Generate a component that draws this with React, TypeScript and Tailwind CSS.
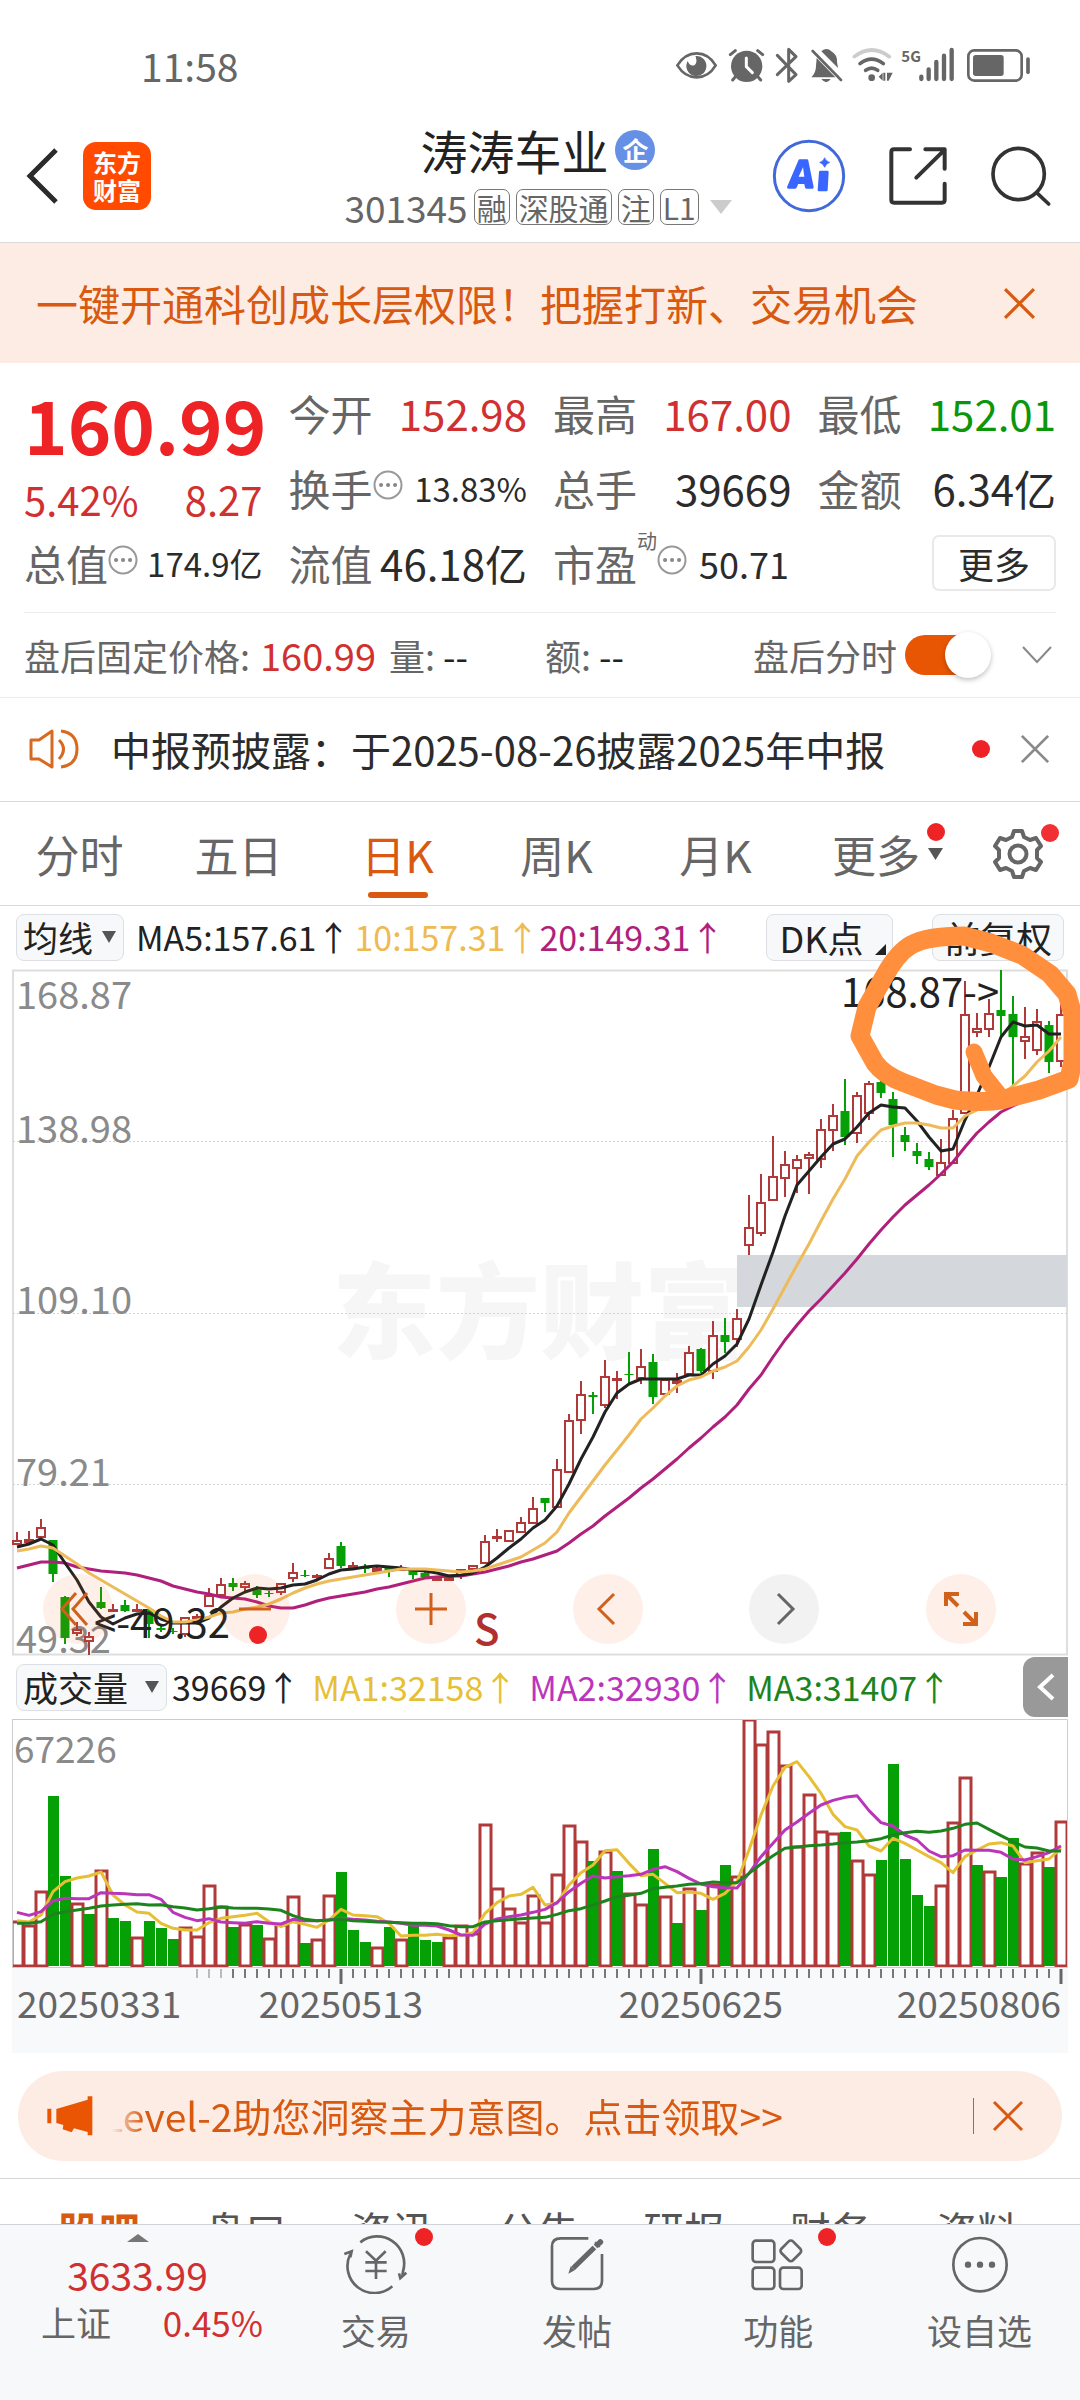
import type { ReactNode } from "react";

const RED = "#b03a3a";
const GREEN = "#05a005";

// direction, open/close top, open/close bottom, high, low
type Candle = ["r" | "g", number, number, number, number];

const candles: Candle[] = [
  ["r", 1540, 1544, 1532, 1544], ["r", 1539, 1542, 1531, 1543], ["r", 1527, 1537, 1519, 1538], ["g", 1540, 1574, 1540, 1582],
  ["g", 1597, 1638, 1596, 1644], ["r", 1629, 1633, 1622, 1636], ["r", 1636, 1641, 1632, 1655], ["g", 1602, 1608, 1587, 1609],
  ["r", 1609, 1610, 1604, 1612], ["g", 1605, 1611, 1600, 1612], ["r", 1609, 1610, 1604, 1612], ["g", 1609, 1624, 1609, 1638],
  ["g", 1628, 1630, 1626, 1632], ["g", 1631, 1632, 1628, 1634], ["r", 1617, 1634, 1617, 1637], ["r", 1616, 1618, 1614, 1619],
  ["r", 1595, 1606, 1588, 1606], ["r", 1584, 1595, 1578, 1595], ["g", 1583, 1587, 1578, 1591], ["r", 1583, 1587, 1581, 1591],
  ["g", 1590, 1595, 1586, 1598], ["g", 1593, 1594, 1591, 1597], ["r", 1583, 1592, 1583, 1595], ["r", 1572, 1578, 1563, 1582],
  ["g", 1575, 1576, 1570, 1577], ["r", 1575, 1577, 1574, 1579], ["r", 1558, 1568, 1553, 1568], ["g", 1546, 1566, 1542, 1568],
  ["r", 1565, 1567, 1562, 1568], ["g", 1567, 1569, 1564, 1573], ["r", 1568, 1571, 1567, 1571], ["g", 1568, 1572, 1567, 1577],
  ["r", 1567, 1570, 1565, 1570], ["g", 1569, 1575, 1568, 1579], ["g", 1573, 1577, 1572, 1577], ["r", 1578, 1580, 1578, 1581],
  ["r", 1577, 1580, 1576, 1581], ["r", 1569, 1575, 1569, 1579], ["r", 1565, 1569, 1565, 1570], ["r", 1541, 1563, 1535, 1563],
  ["r", 1536, 1538, 1529, 1542], ["r", 1530, 1541, 1530, 1541], ["r", 1522, 1532, 1517, 1532], ["r", 1508, 1523, 1497, 1523],
  ["g", 1498, 1503, 1498, 1512], ["r", 1469, 1507, 1459, 1507], ["r", 1420, 1472, 1414, 1472], ["r", 1394, 1420, 1381, 1434],
  ["g", 1395, 1397, 1392, 1414], ["r", 1376, 1405, 1360, 1408], ["r", 1378, 1379, 1371, 1399], ["g", 1374, 1375, 1352, 1383],
  ["r", 1366, 1378, 1349, 1384], ["g", 1362, 1397, 1354, 1404], ["r", 1379, 1394, 1379, 1394], ["r", 1380, 1383, 1373, 1393],
  ["r", 1352, 1374, 1346, 1374], ["g", 1349, 1371, 1348, 1373], ["r", 1335, 1371, 1321, 1379], ["g", 1335, 1342, 1318, 1353],
  ["r", 1318, 1339, 1309, 1347], ["r", 1227, 1245, 1195, 1255], ["r", 1202, 1233, 1174, 1236], ["r", 1176, 1200, 1136, 1200],
  ["r", 1164, 1178, 1151, 1197], ["r", 1159, 1168, 1155, 1193], ["r", 1154, 1158, 1152, 1194], ["r", 1129, 1159, 1119, 1168],
  ["r", 1115, 1130, 1104, 1151], ["g", 1111, 1137, 1079, 1145], ["r", 1095, 1133, 1092, 1143], ["r", 1083, 1113, 1081, 1120],
  ["g", 1082, 1093, 1057, 1098], ["g", 1099, 1125, 1092, 1157], ["g", 1135, 1142, 1127, 1151], ["g", 1151, 1156, 1143, 1164],
  ["g", 1159, 1167, 1152, 1170], ["r", 1162, 1175, 1139, 1175], ["r", 1118, 1163, 1110, 1163], ["r", 1014, 1113, 981, 1113],
  ["r", 1028, 1032, 1013, 1037], ["r", 1013, 1029, 999, 1037], ["g", 1010, 1016, 970, 1037], ["g", 1014, 1037, 996, 1086],
  ["r", 1036, 1041, 1007, 1059], ["r", 1021, 1050, 1009, 1055], ["g", 1025, 1062, 1021, 1073], ["r", 1014, 1061, 999, 1067],
];

const ma5 = [
  1547, 1544, 1539, 1545, 1563, 1580, 1602, 1617, 1624, 1618, 1614, 1613, 1619, 1623, 1623, 1623, 1618, 1607, 1598, 1592, 1588, 1589,
  1588, 1585, 1584, 1580, 1574, 1570, 1569, 1567, 1566, 1567, 1568, 1570, 1571, 1573, 1576, 1575, 1573, 1567, 1558, 1548, 1539, 1528,
  1520, 1506, 1484, 1459, 1437, 1412, 1393, 1384, 1379, 1379, 1379, 1379, 1375, 1375, 1364, 1356, 1344, 1319, 1285, 1252, 1216, 1185,
  1171, 1157, 1144, 1139, 1127, 1113, 1105, 1107, 1108, 1121, 1137, 1151, 1149, 1120, 1095, 1067, 1037, 1022, 1026, 1025, 1034, 1034,
];

const ma10 = [
  1551, 1549, 1546, 1548, 1556, 1564, 1573, 1580, 1587, 1594, 1601, 1608, 1616, 1622, 1622, 1620, 1617, 1613, 1612, 1609, 1607, 1604,
  1599, 1593, 1588, 1584, 1581, 1579, 1577, 1575, 1573, 1571, 1569, 1569, 1569, 1570, 1571, 1572, 1571, 1569, 1565, 1561, 1557, 1550,
  1543, 1532, 1513, 1497, 1481, 1465, 1450, 1435, 1419, 1408, 1396, 1386, 1380, 1377, 1371, 1367, 1361, 1347, 1330, 1309, 1287, 1265,
  1244, 1221, 1199, 1179, 1156, 1142, 1130, 1126, 1123, 1123, 1125, 1128, 1128, 1116, 1110, 1104, 1095, 1086, 1076, 1062, 1051, 1037,
];

const ma20 = [
  1568, 1565, 1562, 1562, 1563, 1567, 1569, 1571, 1572, 1573, 1575, 1578, 1581, 1586, 1589, 1592, 1594, 1597, 1598, 1599, 1602, 1606,
  1608, 1608, 1605, 1601, 1598, 1596, 1594, 1592, 1589, 1587, 1584, 1581, 1578, 1577, 1576, 1576, 1574, 1572, 1569, 1566, 1562, 1559,
  1555, 1551, 1543, 1534, 1526, 1516, 1507, 1498, 1488, 1479, 1469, 1459, 1448, 1438, 1427, 1417, 1405, 1389, 1375, 1357, 1340, 1325,
  1311, 1299, 1286, 1273, 1259, 1244, 1230, 1217, 1205, 1195, 1185, 1174, 1162, 1147, 1133, 1122, 1112, 1106, 1100, 1094, 1088, 1082,
];

const volumeColors = "rrrggrgrggrgggrrrrgrgrrrgrrgggrgrgggrrrrrrrrrrrrgrgrrgrgrgrgrrrrrrrrrgrrgggggrrrgrggrrgr";

const volumes = [
  1921, 1925, 1891, 1796, 1876, 1903, 1914, 1870, 1918, 1921, 1937, 1921, 1928, 1939, 1927, 1936, 1885, 1906, 1927, 1924, 1925, 1938,
  1924, 1896, 1943, 1939, 1895, 1872, 1930, 1942, 1947, 1927, 1939, 1926, 1940, 1942, 1937, 1925, 1933, 1824, 1888, 1908, 1922, 1895,
  1922, 1874, 1825, 1841, 1861, 1851, 1871, 1893, 1904, 1849, 1896, 1923, 1888, 1910, 1884, 1865, 1876, 1719, 1744, 1731, 1765, 1846,
  1794, 1831, 1833, 1832, 1860, 1874, 1860, 1764, 1859, 1895, 1906, 1885, 1822, 1777, 1865, 1871, 1877, 1838, 1863, 1852, 1867, 1821,
];

// volume averages, in thirds of a unit
const volMa1 = [
  1322, 1326, 1305, 1235, 1205, 1194, 1188, 1176, 1245, 1275, 1296, 1300, 1330, 1345, 1350, 1350, 1328, 1315, 1310, 1306, 1300, 1325,
  1340, 1325, 1333, 1342, 1320, 1288, 1305, 1307, 1310, 1330, 1368, 1366, 1366, 1363, 1367, 1366, 1358, 1300, 1268, 1248, 1243, 1222,
  1275, 1270, 1215, 1178, 1155, 1112, 1109, 1150, 1187, 1183, 1210, 1238, 1236, 1240, 1258, 1240, 1205, 1110, 1005, 918, 862, 845,
  890, 940, 1003, 1040, 1050, 1098, 1113, 1075, 1090, 1110, 1130, 1148, 1178, 1130, 1110, 1092, 1088, 1098, 1148, 1142, 1137, 1105,
];

const volMa2 = [
  1297, 1306, 1295, 1262, 1255, 1256, 1256, 1238, 1240, 1241, 1244, 1244, 1258, 1297, 1312, 1322, 1316, 1326, 1328, 1330, 1325, 1330,
  1332, 1318, 1322, 1322, 1320, 1315, 1318, 1320, 1324, 1326, 1330, 1336, 1336, 1338, 1350, 1365, 1366, 1332, 1317, 1310, 1305, 1297,
  1288, 1268, 1235, 1210, 1188, 1194, 1190, 1187, 1183, 1168, 1160, 1175, 1195, 1212, 1220, 1223, 1224, 1180, 1130, 1090, 1050, 1026,
  1000, 975, 961, 952, 947, 992, 1028, 1038, 1065, 1080, 1113, 1130, 1127, 1110, 1111, 1111, 1117, 1137, 1140, 1130, 1118, 1098,
];

const volMa3 = [
  1330, 1330, 1325, 1303, 1295, 1290, 1285, 1278, 1275, 1273, 1271, 1275, 1274, 1280, 1284, 1290, 1286, 1281, 1284, 1285, 1285, 1287,
  1291, 1307, 1318, 1322, 1320, 1318, 1322, 1324, 1326, 1327, 1328, 1330, 1330, 1331, 1337, 1340, 1340, 1326, 1322, 1319, 1316, 1314,
  1312, 1303, 1292, 1286, 1275, 1263, 1250, 1246, 1240, 1226, 1222, 1218, 1213, 1211, 1206, 1208, 1208, 1180, 1152, 1127, 1105, 1101,
  1097, 1095, 1092, 1088, 1086, 1082, 1076, 1065, 1058, 1054, 1057, 1053, 1045, 1033, 1029, 1048, 1067, 1085, 1101, 1104, 1113, 1113,
];

const xOf = (i: number) => 17 + i * 12;
const toPoints = (ys: number[]) => ys.map((y, i) => `${xOf(i)},${y}`).join(" ");
const volY = (v: number) => 1480 + v / 3;

function StatusBar() {
  return (
    <div className="flex h-[126px] items-center justify-between pt-[4px] pr-[47px] pl-[141px] text-[#666]">
      <span className="text-[39px] leading-[40px]">11:58</span>
      <svg width="357" height="40" viewBox="228 45 1071 120" fill="none" stroke="#666">
        {/* eye comfort */}
        <path d="M232 106 C262 58 318 58 347 106 C318 154 262 154 232 106Z" strokeWidth="8" />
        <path d="M289 80 A28 28 0 1 1 263 98 Q270 112 283 108 Q296 102 289 80Z" fill="#666" strokeWidth="4" />
        {/* alarm */}
        <circle cx="440" cy="109" r="47" fill="#666" stroke="none" />
        <path d="M391 74 L406 62 M488 74 L473 62 M405 142 L398 150 M475 142 L482 150" strokeWidth="9" strokeLinecap="round" />
        <path d="M439 84 V110 L457 128" stroke="#fff" strokeWidth="9" strokeLinecap="round" />
        {/* bluetooth */}
        <path d="M532 76 L588 134 L566 154 V58 L588 80 L532 134" strokeWidth="9" strokeLinecap="round" strokeLinejoin="round" />
        {/* muted bell */}
        <path d="M664 64 Q680 50 694 64 Q712 74 711 96 L714 114Z M650 84 L706 142 H634 Q648 128 648 108Z" fill="#666" stroke="none" />
        <path d="M638 63 L723 150" strokeWidth="8" strokeLinecap="round" />
        <path d="M664 147 H692 Q679 166 664 147Z" fill="#666" stroke="none" />
        {/* wifi */}
        <path d="M763 80 Q815 40 868 80" stroke="#ccc" strokeWidth="11" strokeLinecap="round" />
        <path d="M780 101 Q815 74 850 101 M797 121 Q815 108 833 121" strokeWidth="11" strokeLinecap="round" />
        <circle cx="815" cy="143" r="10" fill="#666" stroke="none" />
        <path d="M848 128 V152 L836 140Z M850 128 H856 V152 H850Z M861 128 H878 L866 152 H861Z" fill="#666" stroke="none" />
        <text x="904" y="95" fontSize="45" fontWeight="700" fill="#666" stroke="none">
          5G
        </text>
        <path d="M964 140 V147 M986 118 V147 M1009 96 V147 M1032 77 V147 M1055 60 V147" strokeWidth="13" strokeLinecap="round" />
        <rect x="1105" y="61" width="160" height="91" rx="18" strokeWidth="8" />
        <rect x="1119" y="75" width="92" height="63" rx="8" fill="#666" stroke="none" />
        <path d="M1284 87 V127" strokeWidth="11" strokeLinecap="round" />
      </svg>
    </div>
  );
}

function Tag({ children }: { children: ReactNode }) {
  return (
    <span className="flex h-[36px] items-center rounded-[7px] border border-[#777] px-[2px] text-[30px] leading-[34px]">
      {children}
    </span>
  );
}

function Header() {
  return (
    <header className="grid h-[117px] grid-cols-[1fr_auto_1fr] items-center border-b border-[#d9d9dc] pb-[17px] pl-[24px] pr-[28px]">
      <div className="flex items-center gap-[23px]">
        <button aria-label="返回">
          <svg width="36" height="58" viewBox="0 0 36 58" fill="none" stroke="#2b2b2b" strokeWidth="5">
            <path d="M32 3 L6 29 L32 55" />
          </svg>
        </button>
        <span className="flex h-[68px] w-[68px] flex-col items-center justify-center rounded-[13px] bg-[#ff4a00] text-[24px] font-bold leading-[28px] text-white">
          <span>东方</span>
          <span>财富</span>
        </span>
      </div>
      <div className="flex flex-col items-center gap-[15px]">
        <h1 className="flex items-center gap-[7px] text-[47px] leading-[48px] text-[#222]">
          涛涛车业
          <span className="flex h-[40px] w-[40px] items-center justify-center rounded-full bg-[#6690e6] text-[26px] font-bold leading-[28px] text-white">
            企
          </span>
        </h1>
        <button className="flex items-center gap-[6px] text-[37px] leading-[36px] text-[#666]">
          <span>301345</span>
          <Tag>融</Tag>
          <Tag>深股通</Tag>
          <Tag>注</Tag>
          <Tag>L1</Tag>
          <svg className="ml-[5px]" width="22" height="14" viewBox="0 0 22 14" fill="#ccc">
            <path d="M0 0 H22 L11 14Z" />
          </svg>
        </button>
      </div>
      <div className="flex items-center justify-end gap-[42px]">
        <button aria-label="AI">
          <svg width="74" height="74" viewBox="514 325 222 222">
            <circle cx="625" cy="436" r="104" fill="#fff" stroke="#4169d8" strokeWidth="9" />
            <g fill="#3a66ff" stroke="#3a66ff" strokeWidth="8" strokeLinejoin="round">
              <path d="M597 390 H619 L635 470 H617 L614 456 H590 L584 470 H563Z" />
              <path d="M659 424 H680 L677 478 H655Z" />
              <path d="M672 381 Q676 392 687 395 Q676 399 672 410 Q668 399 657 395 Q668 392 672 381Z" strokeWidth="2" />
            </g>
            <path d="M607 410 L611 438 H594Z" fill="#fff" />
          </svg>
        </button>
        <button aria-label="分享">
          <svg width="60" height="60" viewBox="860 346 180 180" fill="none" stroke="#333" strokeWidth="12" strokeLinecap="round" strokeLinejoin="round">
            <path d="M926 356 H878 Q870 356 870 364 V508 Q870 516 878 516 H1022 Q1030 516 1030 508 V459 M972 356 H1030 V414 M1028 359 L945 441" />
          </svg>
        </button>
        <button aria-label="搜索">
          <svg width="62" height="62" viewBox="1170 341 186 186" fill="none" stroke="#333" strokeWidth="11" strokeLinecap="round">
            <circle cx="1256" cy="428" r="77" />
            <path d="M1310 484 L1346 518" />
          </svg>
        </button>
      </div>
    </header>
  );
}

function CloseIcon({ color, size }: { color: string; size: number }) {
  return (
    <svg width={size} height={size} viewBox="0 0 32 32" fill="none" stroke={color} strokeWidth="3">
      <path d="M2 2 L30 30 M30 2 L2 30" />
    </svg>
  );
}

function MoreInfo() {
  return (
    <svg className="-mt-[6px]" width="30" height="30" viewBox="0 0 30 30" fill="none">
      <circle cx="15" cy="15" r="13.5" stroke="#999" strokeWidth="2" />
      <path d="M8 15 h.1 M15 15 h.1 M22 15 h.1" stroke="#888" strokeWidth="4" strokeLinecap="round" />
    </svg>
  );
}

interface StatProps {
  label: string;
  value: string;
  color?: string;
  small?: boolean;
}

function Stat({ label, value, color = "text-[#2b2b2b]", small }: StatProps) {
  return (
    <div className="flex items-center justify-between">
      <dt className="flex items-center text-[42px] leading-[44px] text-[#666]">
        {label}
        {small ? <MoreInfo /> : null}
      </dt>
      <dd className={`${small ? "text-[33px]" : "text-[42px]"} leading-[44px] ${color}`}>{value}</dd>
    </div>
  );
}

function Quote() {
  return (
    <dl className="mx-[24px] grid auto-rows-[75px] grid-cols-4 gap-x-[26px] border-b border-[#ececee] pb-[12px] pt-[12px]">
      <div className="row-span-2 flex flex-col pt-[8px]">
        <span className="text-center text-[74px] font-bold leading-[80px] text-[#ee2326]">160.99</span>
        <span className="flex justify-between pt-[12px] text-[40px] leading-[48px] text-[#d13030]">
          <span>5.42%</span>
          <span>8.27</span>
        </span>
      </div>
      <Stat label="今开" value="152.98" color="text-[#d13030]" />
      <Stat label="最高" value="167.00" color="text-[#d13030]" />
      <Stat label="最低" value="152.01" color="text-[#0b960b]" />
      <Stat label="换手" value="13.83%" small />
      <Stat label="总手" value="39669" />
      <Stat label="金额" value="6.34亿" />
      <Stat label="总值" value="174.9亿" small />
      <Stat label="流值" value="46.18亿" />
      <div className="flex items-center">
        <dt className="flex items-center text-[42px] leading-[44px] text-[#666]">
          市盈
          <sup className="self-start text-[20px] leading-[20px]">动</sup>
          <MoreInfo />
        </dt>
        <dd className="ml-[12px] text-[36px] leading-[44px] text-[#2b2b2b]">50.71</dd>
      </div>
      <div className="flex items-center justify-end">
        <button className="h-[56px] w-[124px] rounded-[7px] border-2 border-[#e9e9eb] text-[36px] leading-[40px] text-[#2b2b2b]">
          更多
        </button>
      </div>
    </dl>
  );
}

function AfterHours() {
  return (
    <div className="flex h-[85px] items-center border-b border-[#ececee] pl-[24px] pr-[28px] text-[36px] leading-[40px] text-[#666]">
      <span>盘后固定价格:</span>
      <span className="ml-[10px] text-[38px] text-[#d13030]">160.99</span>
      <span className="ml-[13px] w-[156px]">
        量: <span className="text-[#222]">--</span>
      </span>
      <span>
        额: <span className="text-[#222]">--</span>
      </span>
      <label className="ml-auto flex items-center gap-[8px]">
        盘后分时
        <span className="relative flex h-[46px] w-[86px] items-center">
          <input type="checkbox" defaultChecked className="h-[40px] w-[80px] appearance-none rounded-full bg-[#e85604]" />
          <span className="absolute right-0 h-[46px] w-[46px] rounded-full bg-white shadow-[0_2px_5px_rgba(0,0,0,0.25)]" />
        </span>
      </label>
      <button aria-label="展开" className="ml-[31px]">
        <svg width="30" height="18" viewBox="0 0 30 18" fill="none" stroke="#888" strokeWidth="2">
          <path d="M1 1 L15 16 L29 1" />
        </svg>
      </button>
    </div>
  );
}

function News() {
  return (
    <div className="flex h-[104px] items-center border-b border-[#d9d9dc] pb-[2px] pl-[29px] pr-[30px]">
      <svg width="52" height="42" viewBox="0 0 52 42" fill="none" stroke="#d86a20" strokeWidth="3">
        <path d="M2 12 H10 L23 3 V39 L10 31 H2Z" strokeLinejoin="round" />
        <path d="M30 12 Q39 21 30 31" />
        <path d="M32 3 Q48 5 48 21 Q48 37 32 39" />
      </svg>
      <a href="#news" className="ml-[30px] text-[40px] leading-[44px] text-[#2b2b2b]">
        中报预披露：于2025-08-26披露2025年中报
      </a>
      <span className="ml-auto mr-[30px] h-[18px] w-[18px] rounded-full bg-[#ee2326]" />
      <button aria-label="关闭">
        <CloseIcon color="#8a8a8a" size={30} />
      </button>
    </div>
  );
}

function PeriodTabs() {
  const tabs = ["分时", "五日", "日K", "周K", "月K"];
  return (
    <nav className="flex h-[104px] items-center border-b border-[#d9d9dc] pr-[36px] text-[44px] leading-[48px] text-[#666]">
      {tabs.map((tab) => (
        <button key={tab} className={`relative h-full w-[159px] ${tab === "日K" ? "text-[#d8590f]" : ""}`}>
          {tab}
          {tab === "日K" ? (
            <span className="absolute bottom-[7px] left-1/2 h-[6px] w-[60px] -translate-x-1/2 rounded-full bg-[#d8590f]" />
          ) : null}
        </button>
      ))}
      <button className="relative ml-[37px] flex items-center gap-[8px]">
        更多
        <svg width="15" height="12" viewBox="0 0 15 12" fill="#555">
          <path d="M0 0 H15 L7.500 12Z" />
        </svg>
        <span className="absolute -right-[2px] -top-[7px] h-[18px] w-[18px] rounded-full bg-[#ee2326]" />
      </button>
      <button aria-label="设置" className="relative ml-auto">
        <svg width="52" height="52" viewBox="0 0 52 52" fill="none" stroke="#666" strokeWidth="4" strokeLinejoin="round">
          <path d="M22 3 H30 L32 9 L38 12 L44 10 L49 18 L45 22 V30 L49 34 L44 42 L38 40 L32 43 L30 49 H22 L20 43 L14 40 L8 42 L3 34 L7 30 V22 L3 18 L8 10 L14 12 L20 9Z" />
          <circle cx="26" cy="26" r="8.500" />
        </svg>
        <span className="absolute -right-[15px] -top-[4px] h-[18px] w-[18px] rounded-full bg-[#f03034]" />
      </button>
    </nav>
  );
}

function IndicatorSelect({ label, name, width }: { label: string; name: string; width: string }) {
  return (
    <label className="relative flex items-center text-[35px] leading-[44px] text-[#222]">
      <select
        aria-label={name}
        className={`h-[47px] appearance-none rounded-[8px] border border-[#dcdfe4] bg-[#f7f8fa] pl-[6px] ${width}`}
      >
        <option>{label}</option>
      </select>
      <svg className="pointer-events-none absolute right-[8px]" width="14" height="12" viewBox="0 0 14 12" fill="#555">
        <path d="M0 0 H14 L7 12Z" />
      </svg>
    </label>
  );
}

function PriceLegend() {
  return (
    <div className="flex h-[64px] items-center pb-[2px] pl-[16px] pr-[16px] text-[34px] leading-[40px]">
      <IndicatorSelect label="均线" name="主图指标" width="w-[108px]" />
      <span className="ml-[12px] text-[#222]">MA5:157.61↑</span>
      <span className="ml-[4px] text-[#edbb52]">10:157.31↑</span>
      <span className="text-[#b01f7c]">20:149.31↑</span>
      <button className="relative ml-auto h-[47px] w-[127px] rounded-[8px] border border-[#dcdfe4] bg-[#f7f8fa] pr-[16px] text-[36px] text-[#222]">
        DK点
        <svg className="absolute bottom-[5px] right-[6px]" width="11" height="11" viewBox="0 0 11 11" fill="#222">
          <path d="M11 0 V11 H0Z" />
        </svg>
      </button>
      <button className="ml-[39px] h-[47px] w-[132px] rounded-[8px] border border-[#dcdfe4] bg-[#f7f8fa] text-[36px] text-[#222]">
        前复权
      </button>
    </div>
  );
}

function RoundButton({ label, muted, badge, children }: { label: string; muted?: boolean; badge?: boolean; children: ReactNode }) {
  return (
    <button
      aria-label={label}
      className={`relative flex h-[70px] w-[70px] items-center justify-center rounded-full ${muted ? "bg-black/5" : "bg-[#f4621a]/10"}`}
    >
      <svg width="40" height="40" viewBox="0 0 40 40" fill="none" stroke={muted ? "#666" : "#d0611c"} strokeWidth="3">
        {children}
      </svg>
      {badge ? <span className="absolute bottom-0 left-[29px] h-[18px] w-[18px] rounded-full bg-[#ee2326]" /> : null}
    </button>
  );
}

function PriceChart() {
  return (
    <div className="relative mx-[12px]">
      <svg className="relative block h-auto w-full overflow-visible" viewBox="12 970 1056 685" fontSize="38">
        <text x="540" y="1351" textAnchor="middle" fontSize="104" fontWeight="900" fill="#f6f6f6">
          东方财富
        </text>
        <rect x="13" y="970.5" width="1054" height="684" fill="none" stroke="#dedede" strokeWidth="2" />
        <path d="M13 1141.500 H1067 M13 1313.500 H1067 M13 1484.500 H1067" stroke="#d4d4d4" strokeDasharray="2 2" />
        <rect x="737" y="1255" width="330" height="52" fill="#d4d7dc" />
        <g fill="#8a8a8a">
          <text x="16" y="1009">168.87</text>
          <text x="16" y="1143">138.98</text>
          <text x="16" y="1314">109.10</text>
          <text x="16" y="1486">79.21</text>
          <text x="16" y="1653">49.32</text>
        </g>
        {candles.map(([dir, top, bottom, high, low], i) => {
          const x = xOf(i);
          const color = dir === "r" ? RED : GREEN;
          return (
            <g key={i} stroke={color} strokeWidth="2">
              <path d={`M${x} ${high} V${top} M${x} ${bottom} V${low}`} />
              {dir === "r" ? (
                <rect x={x - 4} y={top + 1} width="8" height={Math.max(bottom - top - 1, 1)} fill="#fff" />
              ) : (
                <rect x={x - 4.5} y={top} width="9" height={bottom - top} fill={color} stroke="none" />
              )}
            </g>
          );
        })}
        <g fill="none" strokeWidth="3" strokeLinejoin="round">
          <polyline points={toPoints(ma20)} stroke="#b01f7c" />
          <polyline points={toPoints(ma5)} stroke="#222" />
          <polyline points={toPoints(ma10)} stroke="#edbb5a" />
        </g>
        <g fill="#222" fontSize="40">
          <text x="841" y="1007">168.87-&gt;</text>
          <text x="94" y="1638">&lt;-49.32</text>
        </g>
        <text x="474" y="1645" fontSize="42" fontWeight="500" fill="#b03030">
          S
        </text>
        {/* hand-drawn mark */}
        <g fill="none" stroke="#ff8f3c" strokeWidth="19" strokeLinecap="round" strokeLinejoin="round">
          <path d="M860 1036 L867 1007 L884 977 Q897 953 911 945 Q927 936 964 936 L991 943 L1022 955 L1050 974 L1067 994 L1073 1015 V1061 L1069 1079 L1039 1090 L1001 1100 Q985 1103 955 1100 L936 1095 L902 1082 Q884 1075 875 1063Z" />
          <path d="M974 1052 L984 1076 L1000 1096" strokeWidth="17" />
        </g>
      </svg>
      <div className="absolute bottom-[11px] left-[31px] right-[72px] flex justify-between">
        <RoundButton label="最早">
          <path d="M18 4 L4 20 L18 36 M29 4 L15 20 L29 36" />
        </RoundButton>
        <RoundButton label="缩小" badge>
          <path d="M4 20 H36" />
        </RoundButton>
        <RoundButton label="放大">
          <path d="M4 20 H36 M20 4 V36" />
        </RoundButton>
        <RoundButton label="向左">
          <path d="M26 5 L11 20 L26 35" />
        </RoundButton>
        <RoundButton label="向右" muted>
          <path d="M14 5 L29 20 L14 35" />
        </RoundButton>
        <RoundButton label="全屏">
          <path d="M5 17 V5 H18 M5 5 L17 17 M35 23 V35 H22 M35 35 L23 23" strokeWidth="4" />
        </RoundButton>
      </div>
    </div>
  );
}

function VolumeChart() {
  return (
    <div className="mx-[12px]">
      <svg className="block h-auto w-full" viewBox="12 1719 1056 249">
        {volumes.map((top, i) =>
          volumeColors[i] === "r" ? (
            <rect key={i} x={xOf(i) - 5} y={top + 1} width="11" height={1965 - top} fill="#fff" stroke={RED} strokeWidth="3" />
          ) : (
            <rect key={i} x={xOf(i) - 5} y={top} width="11" height={1966 - top} fill={GREEN} />
          ),
        )}
        <g fill="none" strokeWidth="3" strokeLinejoin="round">
          <polyline points={toPoints(volMa1.map(volY))} stroke="#e6bf35" />
          <polyline points={toPoints(volMa2.map(volY))} stroke="#bb35bb" />
          <polyline points={toPoints(volMa3.map(volY))} stroke="#1d841d" />
        </g>
        <path d="M12 1719.500 H1067.500 V1967 M12.500 1719 V1967 M12 1967.500 H1068" fill="none" stroke="#ccc" />
        <text x="14" y="1763" fontSize="37" fill="#8a8a8a">
          67226
        </text>
      </svg>
      <svg className="block h-auto w-full bg-[#f8f9fb]" viewBox="12 1968 1056 85" fontSize="37" fill="#666">
        {volumes.map((_, i) => {
          if (i < 15) return null;
          const major = i % 30 === 27;
          return (
            <path
              key={i}
              d={`M${xOf(i)} 1969 V${major ? 1984 : 1978}`}
              stroke={major ? "#666" : i < 18 ? "#bbb" : "#777"}
              strokeWidth={major ? 3 : 2}
            />
          );
        })}
        <text x="17" y="2018">20250331</text>
        <text x="341" y="2018" textAnchor="middle">20250513</text>
        <text x="701" y="2018" textAnchor="middle">20250625</text>
        <text x="1061" y="2018" textAnchor="end">20250806</text>
      </svg>
    </div>
  );
}

function VolumeLegend() {
  return (
    <div className="flex h-[64px] items-center pl-[16px] pr-[12px] text-[34px] leading-[40px]">
      <IndicatorSelect label="成交量" name="副图指标" width="w-[151px]" />
      <span className="ml-[5px] text-[#222]">39669↑</span>
      <span className="ml-[12px] text-[#e6bf35]">MA1:32158↑</span>
      <span className="ml-[12px] text-[#bb35bb]">MA2:32930↑</span>
      <span className="ml-[12px] text-[#1d841d]">MA3:31407↑</span>
      <button aria-label="收起" className="ml-auto flex h-[60px] w-[45px] items-center justify-center rounded-l-[12px] bg-[#999]">
        <svg width="18" height="28" viewBox="0 0 18 28" fill="none" stroke="#fff" strokeWidth="4">
          <path d="M16 2 L3 14 L16 26" />
        </svg>
      </button>
    </div>
  );
}

function Promo() {
  return (
    <div className="mx-[18px] mb-[17px] mt-[18px] flex h-[90px] items-center rounded-full bg-[#fcece3] pl-[29px] pr-[38px] text-[#d8590f]">
      <svg width="46" height="40" viewBox="83 137 138 120" fill="#ea5504">
        <path d="M84 175 H96 V219 H84Z M111 176 L205 148 V138 H219 V255 H205 V245 L164 234 L157 246 L130 237 L132 224 L111 218Z" />
      </svg>
      <a
        href="#level2"
        className="ml-[9px] flex-1 pb-[2px] text-[39px] leading-[44px] [mask-image:linear-gradient(to_right,transparent_10px,black_42px)]"
      >
        Level-2助您洞察主力意图。点击领取&gt;&gt;
      </a>
      <span className="mr-[18px] h-[36px] w-px bg-[#d8590f]" />
      <button aria-label="关闭">
        <CloseIcon color="#d8590f" size={32} />
      </button>
    </div>
  );
}

function SectionTabs() {
  const tabs = ["股吧", "盘口", "资讯", "公告", "研报", "财务", "资料"];
  return (
    <nav className="flex h-[46px] justify-between overflow-hidden border-t border-[#d5d7da] pl-[58px] pr-[62px] pt-[28px] text-[41px] leading-[44px] text-[#555]">
      {tabs.map((tab, i) => (
        <a key={tab} href={`#tab-${i}`} className={i === 0 ? "font-bold text-[#d8590f]" : ""}>
          {tab}
        </a>
      ))}
    </nav>
  );
}

function NavItem({ label, badge, children }: { label: string; badge?: boolean; children: ReactNode }) {
  return (
    <button className="relative flex w-[201px] flex-col items-center gap-[12px] pt-[9px]">
      <svg width="66" height="60" viewBox="0 0 198 180" fill="none" stroke="#666" strokeWidth="8">
        {children}
      </svg>
      {badge ? <span className="absolute left-[140px] top-[3px] h-[18px] w-[18px] rounded-full bg-[#ee2326]" /> : null}
      <span>{label}</span>
    </button>
  );
}

function BottomNav() {
  return (
    <footer className="flex h-[176px] items-start justify-between border-t border-[#d0d3d8] bg-[#f7f8fa] text-[35px] leading-[48px] text-[#666]">
      <button className="flex w-[275px] flex-col items-center pt-[9px]">
        <svg width="22" height="8" viewBox="0 0 22 8" fill="#777">
          <path d="M0 8 L11 0 L22 8Z" />
        </svg>
        <span className="mt-[8px] text-[39px] leading-[48px] text-[#d13030]">3633.99</span>
        <span className="flex w-full items-center justify-between pl-[41px] pr-[12px]">
          上证
          <span className="text-[#d13030]">0.45%</span>
        </span>
      </button>
      <NavItem label="交易" badge>
        <path d="M52 25 A81 81 0 0 1 180 112 L178 127 M168 118 L172 132 L190 116 M148 157 A81 81 0 0 1 22 60 M4 60 L26 52 L22 70" />
        <path d="M69 52 L99 80 L128 52 M99 80 V135 M67 85 H131 M67 111 H131" />
      </NavItem>
      <NavItem label="发帖">
        <path d="M133 13 H50 Q24 13 24 37 V141 Q24 165 50 165 H148 Q174 165 174 141 V60" />
        <path d="M160 32 L87 103" strokeWidth="15" />
        <path d="M80 97 L92 109 L73 119Z" fill="#666" stroke="none" />
        <path d="M158 34 L163 29" strokeWidth="20" />
        <path d="M167 26 L169 24" strokeWidth="17" strokeLinecap="round" />
        <path d="M144 30 L162 48" stroke="#f7f8fa" strokeWidth="5" />
      </NavItem>
      <NavItem label="功能" badge>
        <rect x="23" y="20" width="65" height="64" rx="10" />
        <rect x="23" y="101" width="65" height="64" rx="10" />
        <rect x="105" y="101" width="65" height="64" rx="10" />
        <rect x="113" y="26" width="49" height="49" rx="9" transform="rotate(45 137.500 50.500)" />
      </NavItem>
      <NavItem label="设自选">
        <circle cx="99" cy="92" r="80" />
        <path d="M63 92 h.1 M99 92 h.1 M135 92 h.1" strokeWidth="19" strokeLinecap="round" />
      </NavItem>
    </footer>
  );
}

export default function App() {
  return (
    <div className="w-full overflow-hidden bg-white font-['Noto_Sans_CJK_SC',sans-serif]">
      <StatusBar />
      <Header />
      <div className="flex h-[120px] items-center justify-between bg-[#fcece3] pl-[36px] pr-[44px] text-[#d8590f]">
        <a href="#star" className="text-[42px] leading-[48px]">
          一键开通科创成长层权限！把握打新、交易机会
        </a>
        <button aria-label="关闭">
          <CloseIcon color="#d8590f" size={33} />
        </button>
      </div>
      <Quote />
      <AfterHours />
      <News />
      <PeriodTabs />
      <PriceLegend />
      <PriceChart />
      <VolumeLegend />
      <VolumeChart />
      <Promo />
      <SectionTabs />
      <BottomNav />
    </div>
  );
}
